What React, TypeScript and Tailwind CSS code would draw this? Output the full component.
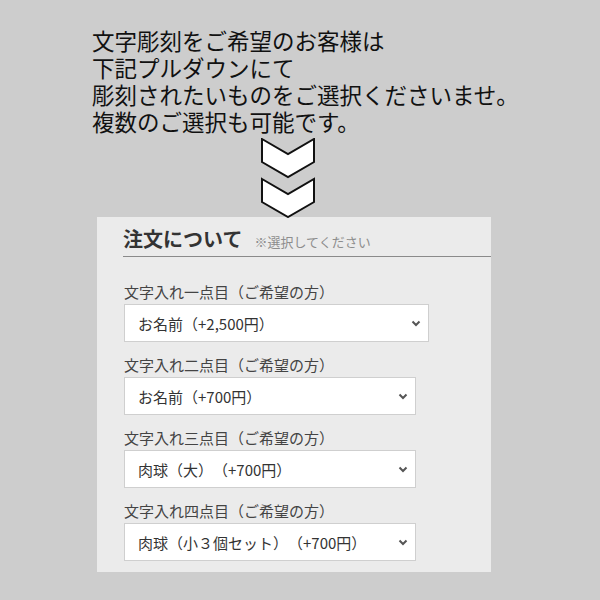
const jp = { fontFamily: '"Noto Sans CJK JP", "Noto Sans", sans-serif' };

const options = [
  { label: '文字入れ一点目（ご希望の方）', value: 'お名前（+2,500円）', wide: true },
  { label: '文字入れ二点目（ご希望の方）', value: 'お名前（+700円）', wide: false },
  { label: '文字入れ三点目（ご希望の方）', value: '肉球（大）（+700円）', wide: false },
  { label: '文字入れ四点目（ご希望の方）', value: '肉球（小３個セット）（+700円）', wide: false },
];

function Chevrons() {
  const shape = (y: number) =>
    `1,${y + 1} 27,${y + 16} 53,${y + 1} 53,${y + 24} 27,${y + 39} 1,${y + 24}`;
  return (
    <svg width="54" height="80" viewBox="0 0 54 80">
      <polygon points={shape(0)} fill="#fff" stroke="#111" strokeWidth="2" strokeLinejoin="miter" />
      <polygon points={shape(40)} fill="#fff" stroke="#111" strokeWidth="2" strokeLinejoin="miter" />
    </svg>
  );
}

function SelectBox({ value, wide }: { value: string; wide: boolean }) {
  return (
    <div
      className={`flex items-center justify-between h-[38px] bg-white border border-[#cfcfcf] pl-[13px] pr-[7px] ${
        wide ? 'w-[305px]' : 'w-[292px]'
      }`}
    >
      <span className="text-[15px] text-[#333] leading-none">{value}</span>
      <svg width="10" height="7" viewBox="0 0 10 7">
        <polyline points="1.5,1.5 5,5 8.5,1.5" fill="none" stroke="#555" strokeWidth="2" />
      </svg>
    </div>
  );
}

export default function App() {
  return (
    <div className="w-[600px] h-[600px] bg-[#cdcdcd] overflow-hidden [text-spacing-trim:space-all]" style={jp}>
      <div className="pl-[92px] pt-[27px] text-[22.5px] leading-[27px] text-[#111]">
        <div>文字彫刻をご希望のお客様は</div>
        <div>下記プルダウンにて</div>
        <div>彫刻されたいものをご選択くださいませ。</div>
        <div>複数のご選択も可能です。</div>
      </div>

      <div className="ml-[261px] mt-[3px] h-[79px]">
        <Chevrons />
      </div>

      <div className="ml-[97px] w-[394px] h-[355px] bg-[#ebebeb]">
        <div className="ml-[26px] h-[40px] flex items-end gap-[12px] border-b border-[#8a8a8a] pb-[7px]">
          <span className="text-[20px] font-bold text-[#333] leading-none">注文について</span>
          <span className="text-[13px] text-[#8d8d8d] leading-none mb-[1px]">※選択してください</span>
        </div>

        <div className="pl-[27px] pt-[26px] flex flex-col gap-[14px]">
          {options.map((o) => (
            <div key={o.label} className="flex flex-col">
              <div className="h-[18px] leading-[18px] text-[15px] text-[#444] mb-[3px]">{o.label}</div>
              <SelectBox value={o.value} wide={o.wide} />
            </div>
          ))}
        </div>
      </div>
    </div>
  );
}
